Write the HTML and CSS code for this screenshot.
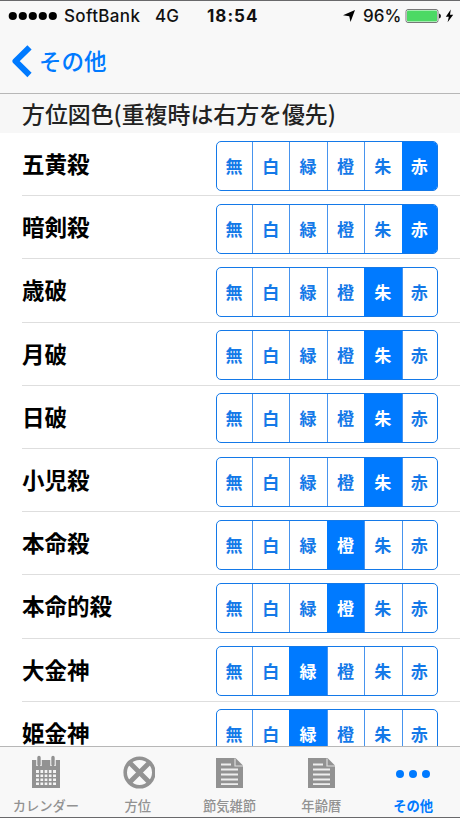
FILE: index.html
```html
<!DOCTYPE html>
<html lang="ja">
<head>
<meta charset="utf-8">
<title>その他</title>
<link rel="stylesheet" href="styles.css">
</head>
<body>
<div class="screen">
  <div class="status">
    <svg class="signal" width="50" height="10" viewBox="0 0 50 10"><circle cx="4.8" cy="5" r="4.100"/><circle cx="14.8" cy="5" r="4.100"/><circle cx="24.8" cy="5" r="4.100"/><circle cx="34.8" cy="5" r="4.100"/><circle cx="44.8" cy="5" r="4.100"/></svg>
    <span class="carrier">SoftBank</span>
    <span class="network">4G</span>
    <span class="clock">18:54</span>
    <svg class="location" width="14" height="14" viewBox="0 0 14 14"><path d="M13 1 8.5 13 7.3 7.2 1 6.3Z"/></svg>
    <span class="percent">96%</span>
    <svg class="battery" width="36" height="16" viewBox="0 0 36 16"><rect x="1" y="1.5" width="32" height="13" rx="2" fill="#fff" stroke="#777"/><rect x="2" y="2.5" width="30" height="11" rx="1" fill="#4cd964"/><path d="M34 5.5q2 .5 2 2.5t-2 2.5Z" fill="#222"/></svg>
    <svg class="bolt" width="9" height="14" viewBox="0 0 9 14"><path d="M5.8.5.8 7.7h3L2.6 13.3 8.2 5.8H5Z"/></svg>
  </div>
  <div class="nav">
    <svg width="22" height="34" viewBox="0 0 22 34"><path d="M18.5 3.300 4.500 17.200 18.500 31" fill="none" stroke="#007aff" stroke-width="6" stroke-linejoin="round"/></svg>
    <span>その他</span>
  </div>
  <div class="section">方位図色(重複時は右方を優先)</div>
  <div class="list" id="list"></div>
  <div class="tabs">
    <div class="tab"><svg width="32" height="34" viewBox="0 0 32 34"><path d="M2 5h28v28H2Z"/><g stroke="#f8f8f8" stroke-width="5.5"><path d="M9 1v10M23 1v10"/></g><g stroke="#929292" stroke-width="3.400" stroke-linecap="round"><path d="M9 2.500v7M23 2.500v7"/></g><path d="M6 15h20v15H6Z" fill="#f4f4f4"/><path d="M9.700 15v15M13.900 15v15M18.100 15v15M22.300 15v15M6 18.800h20M6 22.800h20M6 26.800h20" fill="none" stroke="#929292" stroke-width="1.500"/></svg><span>カレンダー</span></div>
    <div class="tab"><svg width="34" height="34" viewBox="0 0 34 34"><g fill="none" stroke="#929292"><circle cx="18.5" cy="17.5" r="14.300" stroke-width="3.600"/><path d="m9 8 19 19M28 8 9 27" stroke-width="4.800"/></g></svg><span>方位</span></div>
    <div class="tab"><svg width="32" height="34" viewBox="0 0 32 34"><path d="M3 3h19.500L30 10.500V33H3Z"/><path d="M22 3.500v7.500h8" fill="none" stroke="#ddd" stroke-width="1.200"/><path d="M8 9.500h10M8 14.500h17M8 19.500h17M8 24.500h17M8 29.200h17" stroke="#eee" stroke-width="1.800"/></svg><span>節気雑節</span></div>
    <div class="tab"><svg width="32" height="34" viewBox="0 0 32 34"><path d="M3 3h19.500L30 10.500V33H3Z"/><path d="M22 3.500v7.500h8" fill="none" stroke="#ddd" stroke-width="1.200"/><path d="M8 9.500h10M8 14.500h17M8 19.500h17M8 24.500h17M8 29.200h17" stroke="#eee" stroke-width="1.800"/></svg><span>年齢暦</span></div>
    <div class="tab active"><svg width="36" height="34" viewBox="0 0 36 34"><circle cx="5" cy="19" r="4"/><circle cx="18" cy="19" r="4"/><circle cx="31" cy="19" r="4"/></svg><span>その他</span></div>
  </div>
</div>
<script src="app.js"></script>
</body>
</html>
```
FILE: styles.css
```css
* { box-sizing: border-box; }
body { margin: 0; font-family: "Noto Sans CJK JP", sans-serif; background: #fff; }
.screen { width: 460px; height: 818px; display: flex; flex-direction: column; overflow: hidden; border-top: 1px solid #69696b; border-bottom: 1px solid #69696b; }
.status { flex: none; height: 29px; background: #f8f8f8; display: flex; align-items: center; font: 500 17px/28px Inter, sans-serif; color: #111; padding: 1px 0 0 8px; white-space: nowrap; }
.status svg, .status span { flex: none; }
.carrier { width: 92px; padding-left: 6px; letter-spacing: .35px; }
.network { width: 57px; padding-left: 5px; }
.clock { width: 135px; font-weight: 700; letter-spacing: 1px; }
.percent { width: 41px; margin-left: 7px; }
.battery { margin-left: 1px; }
.bolt { margin-left: 4px; }
.nav { flex: none; height: 64px; background: #f8f8f8; border-bottom: 1px solid #b7b7b7; display: flex; align-items: center; padding: 0 0 2px 11px; color: #007aff; font-size: 22.5px; font-weight: 500; line-height: 34px; }
.nav span { margin: -2px 0 0 6px; }
.section { flex: none; height: 39px; background: #f7f7f7; padding-left: 22px; font-size: 22.9px; line-height: 39px; font-weight: 500; color: #222; white-space: nowrap; }
.list { flex: 1; min-height: 0; overflow: hidden; background: #fff; }
.row { height: 63.2px; margin-left: 22px; padding-right: 22px; border-bottom: 1px solid #dedede; display: flex; align-items: center; justify-content: space-between; }
.name { font-size: 22.5px; line-height: 34px; font-weight: 700; color: #000; margin-top: -2px; }
.segments { width: 222px; height: 50px; border: 1px solid #1479e8; border-radius: 5px; display: grid; grid-template-columns: 35px repeat(4, 37.400px) 1fr; overflow: hidden; margin-top: 3px; }
.segment { display: flex; align-items: center; justify-content: center; color: #1479e8; font-size: 17px; line-height: 25px; font-weight: 700; border-left: 1px solid #4794ee; padding: 0 1px 1px 0; }
.segment:first-child { border-left: 0; }
.segment.on { background: #007aff; color: #fff; border-color: #007aff; }
.tabs { flex: none; height: 71px; background: #f8f8f8; border-top: 1px solid #b7b7b7; display: grid; grid-template-columns: repeat(5, 91.800px); }
.tab { display: flex; flex-direction: column; align-items: center; padding-top: 8px; color: #929292; font-size: 13.3px; line-height: 20px; font-weight: 500; white-space: nowrap; }
.tab svg { fill: #929292; display: block; }
.tab span { margin-top: 7px; }
.tab.active { color: #007aff; font-weight: 700; }
.tab.active svg { fill: #007aff; }
```
FILE: app.js
```js
const colors = ["無", "白", "緑", "橙", "朱", "赤"];
const rows = [["五黄殺", 5], ["暗剣殺", 5], ["歳破", 4], ["月破", 4], ["日破", 4], ["小児殺", 4], ["本命殺", 3], ["本命的殺", 3], ["大金神", 2], ["姫金神", 2]];
document.getElementById("list").innerHTML = rows.map(([name, selected]) =>
  `<div class="row"><span class="name">${name}</span><div class="segments">${colors.map((c, i) =>
    `<span class="segment${i === selected ? " on" : ""}">${c}</span>`).join("")}</div></div>`).join("");
```
